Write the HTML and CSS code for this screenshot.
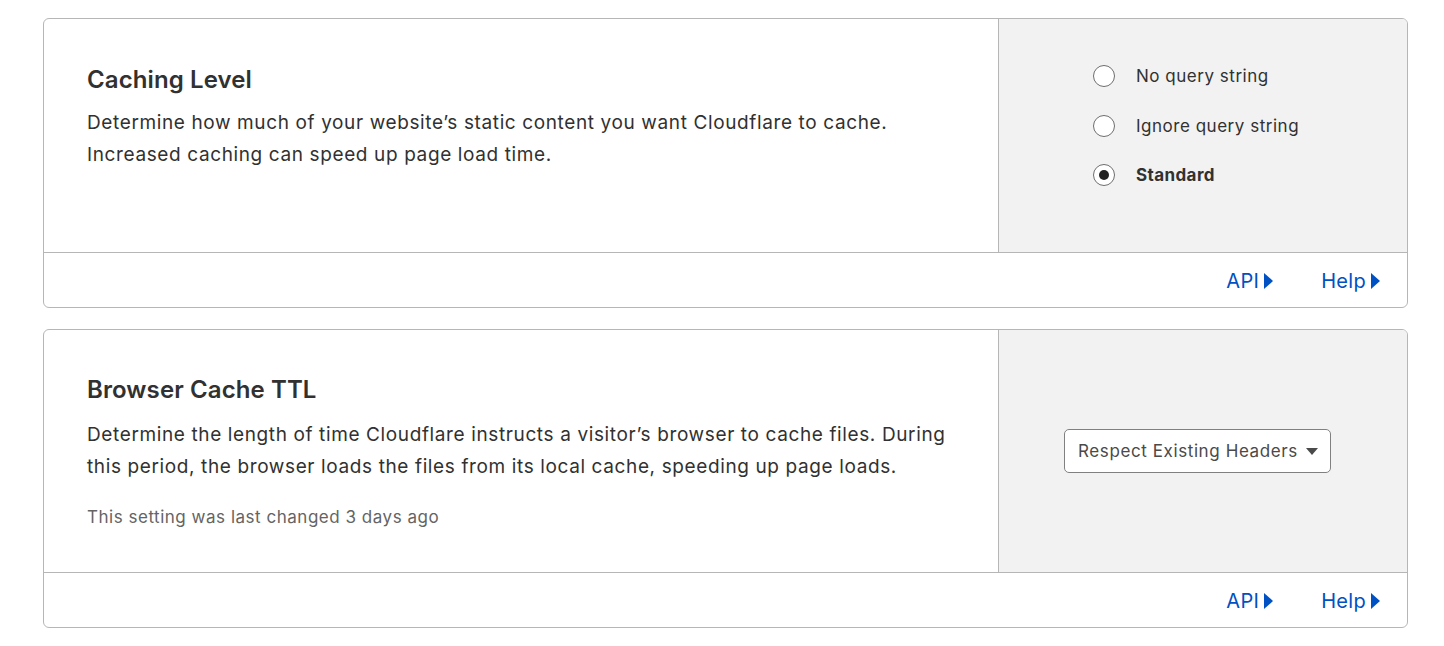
FILE: index.html
```html
<!DOCTYPE html>
<html>
<head>
<meta charset="utf-8">
<link rel="stylesheet" href="styles.css">
</head>
<body>
<div class="page">
  <section class="card">
    <div class="card-body">
      <div class="card-main card-main-1">
        <h2 class="title">Caching Level</h2>
        <p class="desc">Determine how much of your website’s static content you want Cloudflare to cache.<br>Increased caching can speed up page load time.</p>
      </div>
      <div class="card-side side-radios">
        <ul class="radios">
          <li class="radio-row"><span class="radio"></span><span class="radio-label">No query string</span></li>
          <li class="radio-row"><span class="radio"></span><span class="radio-label">Ignore query string</span></li>
          <li class="radio-row"><span class="radio checked"></span><span class="radio-label bold">Standard</span></li>
        </ul>
      </div>
    </div>
    <div class="card-footer">
      <a class="link">API<span class="tri"></span></a>
      <a class="link">Help<span class="tri"></span></a>
    </div>
  </section>

  <section class="card">
    <div class="card-body">
      <div class="card-main card-main-2">
        <h2 class="title">Browser Cache TTL</h2>
        <p class="desc">Determine the length of time Cloudflare instructs a visitor’s browser to cache files. During<br>this period, the browser loads the files from its local cache, speeding up page loads.</p>
        <p class="note">This setting was last changed 3 days ago</p>
      </div>
      <div class="card-side side-center">
        <div class="select">Respect Existing Headers<span class="caret"></span></div>
      </div>
    </div>
    <div class="card-footer">
      <a class="link">API<span class="tri"></span></a>
      <a class="link">Help<span class="tri"></span></a>
    </div>
  </section>
</div>
</body>
</html>
```

FILE: styles.css
```css
* { box-sizing: border-box; }
html, body { margin: 0; padding: 0; background: #fff; }
body {
  font-family: Inter, "Noto Sans", "Liberation Sans", sans-serif;
  color: #313131;
}
.page {
  padding: 18px 36px 0 43px;
  display: flex;
  flex-direction: column;
  gap: 21px;
}
.card {
  border: 1px solid #b6b6b6;
  border-radius: 6px;
  overflow: hidden;
  background: #fff;
}
.card-body {
  display: flex;
  border-bottom: 1px solid #b6b6b6;
}
.card-main {
  flex: 1;
  padding: 45px 43px 0 43px;
}
.card-main-1 { min-height: 233px; }
.card-main-2 { padding-top: 44px; padding-bottom: 43px; }
.title {
  margin: 0;
  font-size: 24px;
  line-height: 32px;
  font-weight: 600;
  color: #313131;
  letter-spacing: 0.1px;
}
.desc {
  margin: 11px 0 0;
  font-size: 19px;
  line-height: 32px;
  color: #313131;
  letter-spacing: 0.62px;
}
.card-main-2 .desc { margin-top: 13px; }
.note {
  margin: 22px 0 0;
  font-size: 17px;
  line-height: 24px;
  color: #646464;
  letter-spacing: 0.52px;
}
.card-side {
  width: 409px;
  background: #f2f2f2;
  border-left: 1px solid #b6b6b6;
}
.side-radios { padding: 46px 0 0 94px; }
.radios {
  list-style: none;
  margin: 0;
  padding: 0;
  display: flex;
  flex-direction: column;
  gap: 27.5px;
}
.radio-row {
  display: flex;
  align-items: center;
  height: 22px;
}
.radio {
  width: 22px;
  height: 22px;
  flex: none;
  border: 1px solid #6e6e6e;
  border-radius: 50%;
  background: #fff;
  display: flex;
  align-items: center;
  justify-content: center;
}
.radio.checked::after {
  content: "";
  width: 10px;
  height: 10px;
  border-radius: 50%;
  background: #222;
}
.radio-label {
  margin-left: 21px;
  font-size: 17px;
  color: #313131;
  letter-spacing: 0.52px;
}
.radio-label.bold { font-weight: 700; letter-spacing: 0.4px; }
.side-center {
  display: flex;
  align-items: center;
  padding-left: 65px;
}
.select {
  display: flex;
  align-items: center;
  height: 44px;
  width: 267px;
  padding: 0 0 0 13px;
  border: 1px solid #808080;
  border-radius: 5px;
  background: #fff;
  font-size: 17px;
  color: #4a4a4a;
  letter-spacing: 0.6px;
}
.caret {
  margin-left: 8px;
  width: 0;
  height: 0;
  border-left: 6px solid transparent;
  border-right: 6px solid transparent;
  border-top: 7px solid #4a4a4a;
}
.card-footer {
  height: 54px;
  display: flex;
  justify-content: flex-end;
  align-items: center;
  padding-right: 27px;
  padding-top: 1px;
  gap: 48px;
}
.link {
  display: flex;
  align-items: center;
  font-size: 20px;
  color: #0051c3;
  letter-spacing: 0.3px;
  cursor: pointer;
}
.tri {
  margin-left: 5px;
  width: 0;
  height: 0;
  border-top: 8px solid transparent;
  border-bottom: 8px solid transparent;
  border-left: 9px solid #0051c3;
}
```
